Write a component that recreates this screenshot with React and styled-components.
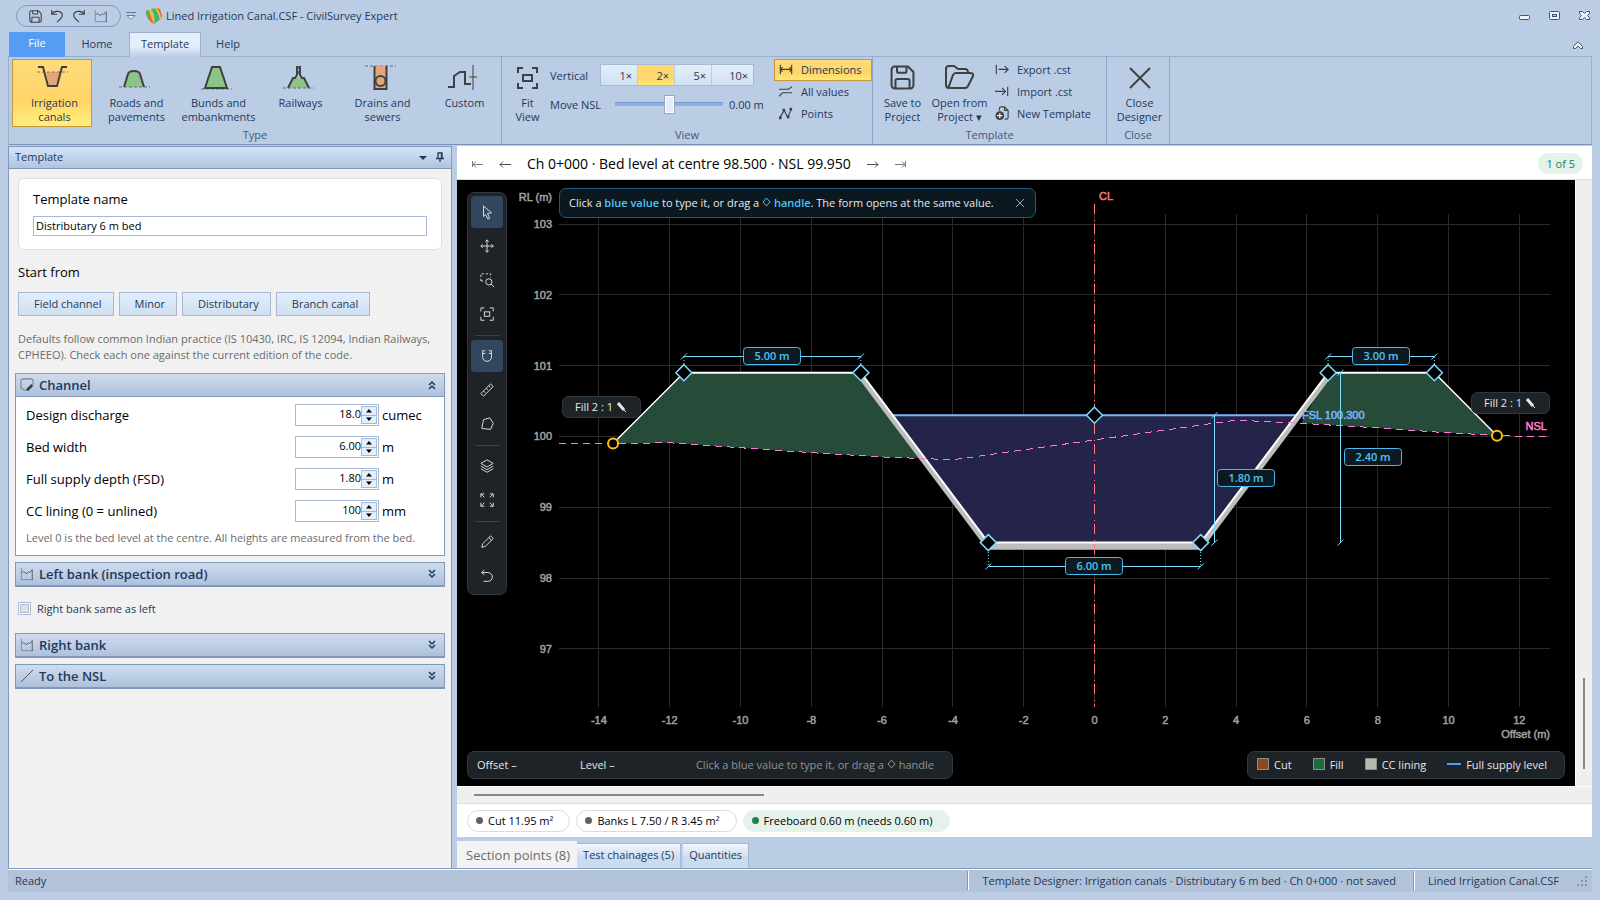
import React from 'react';
import styled, {createGlobalStyle, css} from 'styled-components';

const GlobalStyle = createGlobalStyle`
  * {
    box-sizing: border-box;
  }

  body {
    margin: 0;
    background: #bbcde5;
  }

  body, button, input {
    font-family: 'Open Sans', 'Noto Sans', sans-serif;
    font-size: 11px;
    color: #1e395b;
  }

  button {
    margin: 0;
    padding: 0;
    border: 0;
    background: none;
  }

  svg {
    display: block;
    flex: none;
  }
`;

const Window = styled.div`
  display: flex;
  flex-direction: column;
  height: 100vh;
  padding: 0 8px 8px;
  overflow: hidden;
`;

/* title bar */

const TitleBar = styled.header`
  display: flex;
  align-items: center;
  height: 32px;
  padding-left: 8px;
`;

const QuickAccess = styled.div`
  display: flex;
  align-items: center;
  gap: 8px;
  height: 22px;
  padding: 0 12px;
  border: 1px solid #7f9bbf;
  border-radius: 11px;
`;

const IconButton = styled.button`
  display: flex;
  align-items: center;
  justify-content: center;
`;

const QuickMore = styled(IconButton)`
  margin: 0 10px 0 5px;
`;

const WindowTitle = styled.h1`
  flex: 1;
  margin: 0;
  padding: 0 0 2px 4px;
  font-size: 11px;
  font-weight: 400;
`;

const WindowButtons = styled.div`
  display: flex;
  gap: 18px;
  padding-right: 1px;
`;

/* ribbon */

const TabBar = styled.nav`
  display: flex;
  height: 25px;
  margin-bottom: -1px;
  z-index: 1;
`;

const RibbonTab = styled.button`
  width: ${props => props.$width}px;
  margin-left: 1px;
  padding-bottom: 3px;

  ${props => props.$file && css`
    background: #549df3;
    color: white;
    padding-bottom: 5px;
  `}

  ${props => props.$active && css`
    border: 1px solid #9bb0cd;
    border-bottom: 0;
    background: linear-gradient(#e4effc 55%, #bbcde5);
  `}
`;

const CollapseRibbon = styled(IconButton)`
  margin: 0 9px 0 auto;
`;

const Ribbon = styled.div`
  display: flex;
  height: 89px;
  border: 1px solid #9bb0cd;
  border-bottom-color: #7a93b8;
`;

const Group = styled.section`
  display: flex;
  flex-direction: column;
  width: ${props => props.$width}px;
  border-right: 1px solid #8fa6c7;
`;

const GroupBody = styled.div`
  display: flex;
  flex: 1;
  gap: ${props => props.$gap || 0}px;
  padding: 2px 0 0 3px;
`;

const GroupTitle = styled.div`
  height: 17px;
  line-height: 16px;
  text-align: center;
  color: #41597d;
`;

const BigButton = styled.button`
  display: flex;
  flex: none;
  flex-direction: column;
  align-items: center;
  gap: 6px;
  width: ${props => props.$width || 80}px;
  height: 68px;
  padding: 5px 0 0;
  border: 1px solid transparent;
  line-height: 14px;
  white-space: pre-line;

  ${props => props.$active && css`
    border-color: #c8973a;
    background: linear-gradient(#fedb7b, #ffd567 60%, #fff07c);
  `}
`;

const TypeLabel = styled.span`
  padding-left: 5px;
`;

const ViewRows = styled.div`
  display: grid;
  grid-template-columns: 60px auto;
  grid-template-rows: 32px 26px;
  align-items: center;
  width: 224px;
`;

const Segments = styled.div`
  display: flex;
  width: 154px;
  height: 22px;
  margin-left: -10px;
  border: 1px solid #a7b9d6;
  background: linear-gradient(#e3eefa, #d0e0f0);
`;

const Segment = styled.button`
  flex: ${props => (props.$wide ? 43 : 37)} 0 0;
  padding-right: 5px;
  text-align: right;
  border-right: 1px solid #bccbe0;
  background: ${props => (props.$active ? 'linear-gradient(#ffd76e 70%, #ffe777)' : 'none')};

  &:last-child {
    border-right: 0;
  }
`;

const SliderRow = styled.div`
  display: flex;
  align-items: center;
  gap: 6px;
  margin-left: 5px;
`;

const Slider = styled.input.attrs({type: 'range'})`
  appearance: none;
  width: 108px;
  height: 20px;
  margin: 0;
  background: none;

  &::-webkit-slider-runnable-track {
    height: 4px;
    background: #8bb0e8;
    border-top: 1px solid #7896c6;
  }

  &::-webkit-slider-thumb {
    appearance: none;
    width: 11px;
    height: 19px;
    margin-top: -8px;
    border: 1px solid #98a9c4;
    background: #e4edf8;
    box-shadow: inset 0 0 0 1px white;
  }
`;

const SmallButtons = styled.div`
  display: flex;
  flex-direction: column;
`;

const SmallButton = styled.button`
  display: flex;
  align-items: center;
  gap: 8px;
  width: ${props => props.$width}px;
  height: 22px;
  padding: 0 0 2px 4px;
  border: 1px solid transparent;

  ${props => props.$active && css`
    border-color: #c8973a;
    background: linear-gradient(#ffdc7c, #ffd565 60%, #ffe777);
  `}
`;

/* left panel */

const Workspace = styled.main`
  display: flex;
  flex: 1;
  min-height: 0;
  gap: 5px;
  padding-top: 1px;
`;

const Panel = styled.aside`
  display: flex;
  flex-direction: column;
  width: 444px;
  border: 1px solid #8299bd;
  border-bottom: 0;
  background: #f1f1f1;
`;

const PanelHeader = styled.div`
  display: flex;
  align-items: center;
  gap: 8px;
  height: 22px;
  padding: 0 6px 2px;
  border-bottom: 1px solid #8299bd;
  background: linear-gradient(#d3e4f8, #afc4de);
`;

const PanelTitle = styled.h2`
  flex: 1;
  margin: 0;
  font-size: 11px;
  font-weight: 400;
`;

const PanelBody = styled.div`
  display: flex;
  flex-direction: column;
  padding: 9px 6px 0;
`;

const NameCard = styled.div`
  display: flex;
  flex-direction: column;
  gap: 7px;
  height: 72px;
  margin: 0 3px;
  padding: 10px 14px 0;
  border: 1px solid #e0e0e0;
  border-radius: 6px;
  background: white;
`;

const FieldLabel = styled.label`
  font-size: 13px;
  line-height: 20px;
  color: #000;
`;

const TextBox = styled.input.attrs({type: 'text'})`
  width: 100%;
  height: 20px;
  padding: 0 2px 1px;
  border: 1px solid #a9b8d6;
  background: white;
  color: #000;
`;

const StartLabel = styled.div`
  margin: 12px 3px 0;
  font-size: 13px;
  line-height: 20px;
  color: #000;
`;

const Presets = styled.div`
  display: flex;
  gap: 5px;
  margin: 10px 3px 0;
`;

const Preset = styled.button`
  height: 24px;
  padding: 0 11px 1px 15px;
  border: 1px solid #a9b8d6;
  background: linear-gradient(#e1edfb, #d0e0f0);
`;

const Note = styled.p`
  margin: ${props => props.$margin || '0'};
  line-height: 16px;
  color: #6b6b6b;
`;

const Accordion = styled.section`
  margin-top: ${props => props.$top}px;
  border: 1px solid #8299bd;
  border-bottom-width: ${props => (props.$open ? 1 : 2)}px;
  background: white;
`;

const AccordionHeader = styled.button`
  display: flex;
  align-items: center;
  gap: 5px;
  width: 100%;
  height: 22px;
  padding: 0 7px 0 4px;
  background: linear-gradient(#cfdcee, #adc1dc);
  font-size: 13px;
  font-weight: 600;
  text-align: left;

  svg:last-child {
    margin-left: auto;
  }
`;

const AccordionBody = styled.div`
  padding: 2px 10px 9px;
  border-top: 1px solid #8299bd;
`;

const Field = styled.div`
  display: grid;
  grid-template-columns: 1fr 84px 52px;
  column-gap: 3px;
  align-items: center;
  height: 32px;
  font-size: 13px;
  color: #000;
`;

const Spin = styled.div`
  display: flex;
  align-items: center;
  height: 22px;
  padding-right: 1px;
  border: 1px solid #a9b8d6;
  background: white;
`;

const SpinInput = styled.input.attrs({type: 'text'})`
  flex: 1;
  min-width: 0;
  height: 18px;
  padding: 0 0 3px;
  border: 0;
  background: none;
  text-align: right;
  color: #000;
`;

const SpinButtons = styled.div`
  display: grid;
  width: 16px;
  height: 18px;
  border: 1px solid #a9b8d6;
  background: #e3eefb;

  button + button {
    border-top: 1px solid #a9b8d6;
  }
`;

const CheckRow = styled.label`
  display: flex;
  align-items: center;
  gap: 6px;
  height: 46px;
  margin: 0 3px;
  padding-bottom: 3px;
`;

const CheckBox = styled.input.attrs({type: 'checkbox'})`
  appearance: none;
  width: 13px;
  height: 13px;
  margin: 0;
  border: 1px solid #a9bbdb;
  background: #dfe1e5;
  box-shadow: inset 0 0 0 1px white, inset 0 0 0 2px #b9bdc4;
`;

/* drawing area */

const Designer = styled.section`
  display: flex;
  flex: 1;
  min-width: 0;
  flex-direction: column;
`;

const StationBar = styled.div`
  display: flex;
  align-items: center;
  gap: 16px;
  height: 34px;
  padding: 2px 9px 0 14px;
  border-bottom: 1px solid #dcdcdc;
  background: white;
`;

const StationTitle = styled.div`
  font-size: 14px;
  line-height: 18px;
  color: #000;
`;

const Badge = styled.span`
  margin-left: auto;
  padding: 0 8px;
  border-radius: 11px;
  background: #e3f2ea;
  color: #1f7d57;
  line-height: 21px;
`;

const ScrollRow = styled.div`
  display: grid;
  flex: 1;
  min-height: 0;
  grid-template-columns: 1fr 17px;
  grid-template-rows: 1fr 18px;
  background: #efefef;
`;

const Canvas = styled.div`
  position: relative;
  overflow: hidden;
  background: #000;
`;

const Drawing = styled.svg`
  width: 100%;
  height: 100%;
`;

const VerticalScroll = styled.div`
  display: flex;
  flex-direction: column;
  justify-content: flex-end;
  align-items: center;
  padding-bottom: 17px;
  border-left: 1px solid white;
`;

const HorizontalScroll = styled.div`
  grid-column: 1 / 3;
  padding: 7px 0 0 17px;
  border-top: 1px solid white;
  border-bottom: 1px solid #dcdcdc;
`;

const Thumb = styled.div`
  width: ${props => (props.$vertical ? '2px' : '290px')};
  height: ${props => (props.$vertical ? '91px' : '2px')};
  background: #868686;
`;

const Floating = styled.div`
  position: absolute;
  display: flex;
  align-items: center;
  border: 1px solid #30383f;
  border-radius: 7px;
  background: #1e2327;
  color: #e4e8ea;
`;

const ToolPalette = styled(Floating)`
  top: 12px;
  left: 10px;
  flex-direction: column;
  gap: 2px;
  width: 40px;
  padding: 3px 3px 2px;
`;

const Tool = styled.button`
  display: flex;
  align-items: center;
  justify-content: center;
  width: 32px;
  height: 32px;
  border-radius: 4px;
  background: ${props => (props.$active ? '#33485f' : 'none')};
  color: #d8dcdf;
`;

const ToolDivider = styled.div`
  width: 25px;
  height: 1px;
  margin: 3px 0 2px;
  background: #3a4249;
`;

const Hint = styled(Floating)`
  top: 8px;
  left: 102px;
  gap: 21px;
  height: 30px;
  padding: 0 10px 1px 9px;
  border-color: #1f5a80;
  background: #0b1820;

  b {
    font-weight: 600;
    color: #4fc3f7;
  }
`;

const Readout = styled(Floating)`
  left: 10px;
  bottom: 7px;
  width: 486px;
  height: 28px;
  padding: 0 18px 2px 9px;
`;

const ReadoutValue = styled.span`
  width: 103px;
`;

const ReadoutTip = styled.span`
  margin-left: auto;
  color: #8a949b;
`;

const Legend = styled(Floating)`
  right: 10px;
  bottom: 7px;
  gap: 21px;
  height: 28px;
  padding: 0 17px 2px 9px;
`;

const LegendItem = styled.span`
  display: flex;
  align-items: center;
  gap: 5px;
`;

const Swatch = styled.i`
  width: ${props => (props.$line ? 14 : 12)}px;
  height: ${props => (props.$line ? 2 : 12)}px;
  border: ${props => (props.$line ? 0 : 1)}px solid #8b8f8c;
  background: ${props => props.$color};
`;

const ChipBar = styled.div`
  display: flex;
  align-items: center;
  gap: 6px;
  height: 33px;
  padding-left: 10px;
  background: white;
`;

const Chip = styled.span`
  display: flex;
  align-items: center;
  gap: 5px;
  height: 22px;
  padding: 0 16px 0 8px;
  border: 1px solid ${props => (props.$ok ? '#e3f2ea' : '#dcdcdc')};
  border-radius: 11px;
  background: ${props => (props.$ok ? '#e3f2ea' : 'white')};
  color: #000;

  &::before {
    content: '';
    width: 7px;
    height: 7px;
    border-radius: 50%;
    background: ${props => (props.$ok ? '#1f7d57' : '#616161')};
  }
`;

const SheetTabs = styled.div`
  display: flex;
  align-items: flex-end;
  height: 31px;
`;

const SheetTab = styled.button`
  height: ${props => (props.$active ? 27 : 25)}px;
  padding: ${props => (props.$active ? '0 7px 0 9px' : '0 6px 3px')};
  border: 1px solid #a3b6d4;
  border-width: ${props => (props.$active ? '0' : '1px 1px 0 0')};
  background: ${props => (props.$active ? '#f3f3f3' : 'linear-gradient(#f2f7fd, #cbdcee 60%)')};
  color: ${props => (props.$active ? '#6b6b6b' : '#1e395b')};
  font-size: ${props => (props.$active ? 13 : 11)}px;

  & + & + & {
    margin-left: 2px;
  }
`;

const StatusBar = styled.footer`
  display: flex;
  align-items: center;
  height: 24px;
  padding: 0 4px 0 7px;
  border-top: 1px solid #7f99bd;
  background: #b1c2d9;
  box-shadow: inset 0 1px 0 white;
`;

const StatusItem = styled.span`
  display: flex;
  align-items: center;
  height: 19px;
  padding: 0 17px 0 14px;
  border-left: 1px solid #8a94a3;
  box-shadow: inset 1px 0 0 white;
`;

const StatusReady = styled.span`
  flex: 1;
`;

/* icons */

const Icon = ({size = 14, box = 16, color = '#404040', width = 1.3, children, ...rest}) => (
  <svg width={size} height={size} viewBox={`0 0 ${box} ${box}`} fill="none" stroke={color}
    strokeWidth={width} aria-hidden="true" {...rest}>
    {children}
  </svg>
);

const SaveIcon = props => (
  <Icon {...props}>
    <path d="M3 1h8.5L15 4.500V13a2 2 0 0 1-2 2H3a2 2 0 0 1-2-2V3a2 2 0 0 1 2-2z"/>
    <path d="M4.500 1v3a1 1 0 0 0 1 1h4a1 1 0 0 0 1-1V1M3.500 15v-5a1 1 0 0 1 1-1h7a1 1 0 0 1 1 1v5"/>
  </Icon>
);

const ProfileIcon = props => (
  <Icon width={1.1} {...props}>
    <path d="M1.500 1v13.500H15" stroke="#858b95"/>
    <path d="M2 6.500l2-1.500 3 2.500 3-2 1 1 3-3.500v12" stroke="#5a5f68"/>
  </Icon>
);

const Chevrons = ({up}) => (
  <Icon size={10} box={10} color="#1e395b" width={1.5} transform={up ? 'rotate(180)' : undefined}>
    <path d="M2 1l3 3 3-3M2 5l3 3 3-3"/>
  </Icon>
);

const typeArt = {
  canal: (
    <>
      <path d="M9 7h14l-4 14h-7z" fill="#e3a67c" stroke="none"/>
      <path d="M0 7h31" stroke="#8a7a55" strokeDasharray="3 2"/>
      <path d="M1 2h5l5 19h9l5-19h5" strokeWidth="2"/>
    </>
  ),
  road: (
    <>
      <path d="M5 22L9 9q6-7 12 0l4 13z" fill="#8cc487" stroke="none"/>
      <path d="M5 22L9 9q1-3 6-3t6 3l4 13" strokeWidth="2"/>
      <path d="M0 22h31" stroke="#606a75" strokeDasharray="3 2"/>
    </>
  ),
  bund: (
    <>
      <path d="M0 24h31" stroke="#606a75" strokeDasharray="3 2"/>
      <path d="M4 23L11 2h8l7 21z" fill="#8cc487" strokeWidth="2"/>
    </>
  ),
  rail: (
    <>
      <path d="M5 23l5-10h11l5 10z" fill="#8cc487" stroke="none"/>
      <path d="M5 23l5-10h2l2-3V1M17 1v9l2 3h2l5 10" strokeWidth="2"/>
      <path d="M0 23h31M15.500 1v8" stroke="#606a75" strokeDasharray="3 2"/>
    </>
  ),
  drain: (
    <>
      <path d="M0 1h31" stroke="#606a75" strokeDasharray="3 2"/>
      <path d="M9 1h13v23H9z" fill="#e3a67c" stroke="none"/>
      <path d="M9.500 1v23h12V1" strokeWidth="2"/>
      <circle cx="15.500" cy="16" r="5" strokeWidth="2"/>
    </>
  ),
  custom: (
    <>
      <path d="M1 22h6V11l6-4h5v12h6" strokeWidth="2"/>
      <path d="M26 0v25M22 12h8"/>
    </>
  ),
};

const TypeIcon = ({name}) => (
  <svg width="31" height="25" viewBox="0 0 31 25" fill="none" stroke="#404040" aria-hidden="true">
    {typeArt[name]}
  </svg>
);

const toolArt = {
  select: <path d="M4 1l9 8-4.500.5L11 15l-2 1-2.500-5L4 13z"/>,
  pan: <path d="M8 1v14M1 8h14M6 3l2-2 2 2M6 13l2 2 2-2M3 6L1 8l2 2M13 6l2 2-2 2"/>,
  zoom: (
    <>
      <path d="M1 9V1h11v4M1 9h4" strokeDasharray="2.500 2"/>
      <circle cx="10" cy="10" r="3.500"/>
      <path d="M12.500 12.500L16 16"/>
    </>
  ),
  fit: (
    <>
      <path d="M1 5V1h4M11 1h4v4M15 11v4h-4M5 15H1v-4"/>
      <rect x="5" y="5.500" width="6" height="5"/>
    </>
  ),
  snap: <path d="M3 2v7a5 5 0 0 0 10 0V2M3 2h3M10 2h3M3 5h3M10 5h3"/>,
  measure: <path d="M1 12L12 1l3 3L4 15zM4 9l2 2M7 6l2 2M10 3l2 2"/>,
  polygon: <path d="M4 3l7-2 4 6-3 7-10-1z"/>,
  layers: <path d="M8 1l7 4-7 4-7-4zM1 8l7 4 7-4M1 11l7 4 7-4"/>,
  expand: <path d="M1 5V1h4M11 1h4v4M15 11v4h-4M5 15H1v-4M1 1l4 4M15 1l-4 4M15 15l-4-4M1 15l4-4"/>,
  pencil: <path d="M2 14l1-4 9-9 3 3-9 9zM10 3l3 3"/>,
  undo: <path d="M5 1L2 4l3 3M2 4h7a5 5 0 0 1 0 10H4"/>,
};

const tools = ['select', 'pan', 'zoom', 'fit', null, 'snap', 'measure', 'polygon', null, 'layers', 'expand', null, 'pencil', 'undo'];

const types = [
  {name: 'canal', label: 'Irrigation\ncanals'},
  {name: 'road', label: 'Roads and\npavements'},
  {name: 'bund', label: 'Bunds and\nembankments'},
  {name: 'rail', label: 'Railways'},
  {name: 'drain', label: 'Drains and\nsewers'},
  {name: 'custom', label: 'Custom'},
];

const fields = [
  {id: 'discharge', label: 'Design discharge', value: '18.0', unit: 'cumec'},
  {id: 'bed', label: 'Bed width', value: '6.00', unit: 'm'},
  {id: 'fsd', label: 'Full supply depth (FSD)', value: '1.80', unit: 'm'},
  {id: 'lining', label: 'CC lining (0 = unlined)', value: '100', unit: 'mm'},
];

/* cross section, offsets and levels in metres, vertical scale doubled */

const X = offset => 637.5 + 35.4 * offset;
const Y = level => 44 + 70.8 * (103 - level);
const points = list => list.map(([o, l]) => `${X(o)},${Y(l)}`).join(' ');

const offsets = [-14, -12, -10, -8, -6, -4, -2, 0, 2, 4, 6, 8, 10, 12];
const levels = [103, 102, 101, 100, 99, 98, 97];

const surface = [[-13.6, 99.9], [-11.6, 100.9], [-6.6, 100.9], [-3, 98.5], [3, 98.5], [6.6, 100.9], [9.6, 100.9], [11.37, 100.01]];
const lining = [[-6.6, 100.9], [-3, 98.5], [3, 98.5], [6.6, 100.9], [6.78, 100.9], [3.03, 98.4], [-3.03, 98.4], [-6.78, 100.9]];
const ground = [[-15.12, 99.9], [-13.6, 99.9], [-12, 99.91], [-10, 99.84], [-8, 99.77], [-6, 99.71], [-4, 99.67], [0, 99.95], [4, 100.23], [6, 100.18], [8, 100.12], [10, 100.05], [12, 100], [12.87, 100]];
const leftFill = [[-13.6, 99.9], [-11.6, 100.9], [-6.6, 100.9], [-4.95, 99.69], [-6, 99.71], [-8, 99.77], [-10, 99.84], [-12, 99.91]];
const rightFill = [[5.85, 100.19], [6.6, 100.9], [9.6, 100.9], [11.37, 100.01], [10, 100.05], [8, 100.12]];
const handles = [[-11.6, 100.9], [-6.6, 100.9], [-3, 98.5], [0, 100.3], [3, 98.5], [6.6, 100.9], [9.6, 100.9]];

const AxisText = styled.text`
  font: 11px 'Liberation Sans', sans-serif;
  fill: ${props => props.$color || '#a0a0a0'};
  stroke: ${props => props.$color || '#a0a0a0'};
  stroke-width: 0.5;
`;

const DimText = styled.text`
  font: 600 11px 'Open Sans', sans-serif;
  fill: #4fc3f7;
  text-anchor: middle;
`;

const Dimension = ({x1, y1, x2, y2, lx, ly, label}) => (
  <g>
    <path d={`M${x1} ${y1}L${x2} ${y2}M${x1 - 3} ${y1 + 3}l6-6M${x2 - 3} ${y2 + 3}l6-6`} stroke="#7bdcff"/>
    <rect x={lx - 28.5} y={ly - 8.5} width="57" height="17" rx="3" fill="#0e1a22" stroke="#4cb8f0"/>
    <DimText x={lx} y={ly + 4}>{label}</DimText>
  </g>
);

const SlopeTag = ({x, y}) => (
  <g>
    <rect x={x + 0.5} y={y + 0.5} width="78" height="21" rx="6" fill="#1e2327" stroke="#30383f"/>
    <text x={x + 13} y={y + 15} fontSize="11" fill="#e4e8ea">Fill 2 : 1</text>
    <path d={`M${x + 56} ${y + 7}l6 7`} stroke="#e4e8ea" strokeWidth="3"/>
    <path d={`M${x + 62} ${y + 14}l2 2`} stroke="#e4e8ea"/>
  </g>
);

const CrossSection = () => (
  <Drawing viewBox="0 0 1118 606" role="img" aria-label="Canal cross section">
    <g stroke="#2b2b2b" shapeRendering="crispEdges">
      {offsets.map(o => <line key={o} x1={X(o)} x2={X(o)} y1="34" y2="527"/>)}
      {levels.map(l => <line key={l} x1="102" x2="1093" y1={Y(l)} y2={Y(l)}/>)}
    </g>
    <AxisText x="95" y="21" textAnchor="end">RL (m)</AxisText>
    {levels.map(l => <AxisText key={l} x="95" y={Y(l) + 4} textAnchor="end">{l}</AxisText>)}
    {offsets.map(o => <AxisText key={o} x={X(o)} y="544" textAnchor="middle">{o}</AxisText>)}
    <AxisText x="1093" y="558" textAnchor="end">Offset (m)</AxisText>

    <polygon points={points([[-5.7, 100.3], [-3, 98.5], [3, 98.5], [5.7, 100.3]])} fill="#24244a"/>
    <polygon points={points(leftFill)} fill="#264b38"/>
    <polygon points={points(rightFill)} fill="#264b38"/>
    <polygon points={points(lining)} fill="#bdbdbd"/>
    <line x1={X(-5.7)} x2={X(5.7)} y1={Y(100.3)} y2={Y(100.3)} stroke="#7ab6ff" strokeWidth="2"/>
    <polyline points={points(surface.slice(0, 2))} fill="none" stroke="#fff" strokeWidth="1.500"/>
    <polyline points={points(surface.slice(1, 7))} fill="none" stroke="#fff" strokeWidth="2"/>
    <polyline points={points(surface.slice(6))} fill="none" stroke="#fff" strokeWidth="1.500"/>
    <polyline points={points(ground)} fill="none" stroke="#ff7bdc" strokeDasharray="7 5" shapeRendering="crispEdges"/>
    <line x1={X(0)} x2={X(0)} y1="24" y2="527" stroke="#ff7b7b" strokeDasharray="10 6 1 3"/>
    <AxisText x="642" y="20" $color="#ff7b7b">CL</AxisText>
    <AxisText x="845" y="239" $color="#7ab6ff">FSL 100.300</AxisText>
    <AxisText x="1090" y="250" textAnchor="end" $color="#ff7bdc">NSL</AxisText>

    <SlopeTag x={105} y={216}/>
    <SlopeTag x={1014} y={212}/>

    <g stroke="#7bdcff" strokeDasharray="1 2">
      <path d={`M${X(-11.6)} 177V200M${X(-6.6)} 177V200M${X(6.6)} 177V200M${X(9.6)} 177V200`}/>
      <path d={`M${X(-3)} 363V386M${X(3)} 363V386`}/>
    </g>
    <g fill="#000" stroke="#7bdcff" strokeWidth="1.500">
      {handles.map(([o, l]) => (
        <path key={o} d={`M${X(o)} ${Y(l) - 8}l8 8-8 8-8-8z`}/>
      ))}
    </g>
    <Dimension x1={X(-11.6)} y1={176.5} x2={X(-6.6)} y2={176.5} lx={315} ly={176} label="5.00 m"/>
    <Dimension x1={X(6.6)} y1={176.5} x2={X(9.6)} y2={176.5} lx={924} ly={176} label="3.00 m"/>
    <Dimension x1={X(-3)} y1={386.5} x2={X(3)} y2={386.5} lx={637} ly={386} label="6.00 m"/>
    <Dimension x1={757.5} y1={Y(100.3)} x2={757.5} y2={Y(98.5)} lx={789} ly={298} label="1.80 m"/>
    <Dimension x1={883.5} y1={Y(100.9)} x2={883.5} y2={Y(98.5)} lx={916} ly={277} label="2.40 m"/>
    <g fill="#000" stroke="#ffc107" strokeWidth="2">
      <circle cx={X(-13.6)} cy={Y(99.9)} r="5"/>
      <circle cx={X(11.37)} cy={Y(100.01)} r="5"/>
    </g>
  </Drawing>
);

const DiamondGlyph = styled.svg`
  display: inline-block;
`;

const Diamond = ({color = 'currentColor'}) => (
  <DiamondGlyph width="9" height="10" viewBox="0 0 9 10" fill="none" stroke={color} aria-hidden="true">
    <path d="M4.500 1L8 5 4.500 9 1 5z"/>
  </DiamondGlyph>
);

const Section = ({title, icon, top, open, children}) => (
  <Accordion $top={top} $open={open}>
    <AccordionHeader aria-expanded={!!open}>
      {icon}
      {title}
      <Chevrons up={open}/>
    </AccordionHeader>
    {open ? <AccordionBody>{children}</AccordionBody> : null}
  </Accordion>
);

const TitleArea = () => (
  <TitleBar>
    <QuickAccess>
      <IconButton aria-label="Save"><SaveIcon size={13}/></IconButton>
      <IconButton aria-label="Undo">
        <Icon><path d="M2 1v5h6M2 6c3-5 12-4 12 1 0 3-3 5-6 8"/></Icon>
      </IconButton>
      <IconButton aria-label="Redo">
        <Icon><path d="M14 1v5H8M14 6C11 1 2 2 2 7c0 3 3 5 6 8"/></Icon>
      </IconButton>
      <IconButton aria-label="Section"><ProfileIcon/></IconButton>
    </QuickAccess>
    <QuickMore aria-label="Customize toolbar">
      <Icon size={10} box={10} color="#5f7da6" width={1}>
        <path d="M0 1.500h10M1 4.500h8L5 8.500z" fill="#e6eef9"/>
      </Icon>
    </QuickMore>
    <svg width="16" height="16" viewBox="0 0 16 16" aria-hidden="true">
      <path d="M0 3l4-1 5 14q-3 0-5-3Q0 9 0 3z" fill="#e5663c"/>
      <path d="M0 3l3-1 2 5-3 3Q0 7 0 3z" fill="#52b26b"/>
      <path d="M3 2l4-1 4 12-3 3Q5 10 3 2z" fill="#efc140"/>
      <path d="M5 1l6-1 5 10-8 6Q10 8 5 1z" fill="#3fb573"/>
      <path d="M9 0h4l3 9-2 3Q13 6 9 0z" fill="#f0c63e"/>
      <path d="M11 0l3 1 2 7-1 2Q14 4 11 0z" fill="#e5663c"/>
    </svg>
    <WindowTitle>Lined Irrigation Canal.CSF - CivilSurvey Expert</WindowTitle>
    <WindowButtons>
      <IconButton aria-label="Minimize">
        <Icon size={12} box={12} color="#47536b" width={1}><rect x=".5" y="5.500" width="10" height="4" rx="1" fill="#eef3fa"/></Icon>
      </IconButton>
      <IconButton aria-label="Maximize">
        <Icon size={12} box={12} color="#47536b" width={1}>
          <rect x=".5" y="1.500" width="10" height="8" rx="1" fill="#eef3fa"/>
          <rect x="3.500" y="4.500" width="4" height="2" fill="#bbcde5"/>
        </Icon>
      </IconButton>
      <IconButton aria-label="Close">
        <Icon size={12} box={12} color="#47536b" width={1}>
          <path d="M.5 1.500h3l2 2 2-2h3v2l-2 2 2 2v2h-3l-2-2-2 2h-3v-2l2-2-2-2z" fill="#eef3fa"/>
        </Icon>
      </IconButton>
    </WindowButtons>
  </TitleBar>
);

const RibbonArea = () => (
  <>
    <TabBar>
      <RibbonTab $width={56} $file>File</RibbonTab>
      <RibbonTab $width={62}>Home</RibbonTab>
      <RibbonTab $width={72} $active>Template</RibbonTab>
      <RibbonTab $width={52}>Help</RibbonTab>
      <CollapseRibbon aria-label="Collapse ribbon">
        <Icon size={10} box={10} color="#47536b" width={1}>
          <path d="M.5 6.500l4-4.500h1l4 4.500v2h-2L5 6 2.500 8.500h-2z" fill="#eef3fa"/>
        </Icon>
      </CollapseRibbon>
    </TabBar>
    <Ribbon>
      <Group $width={493}>
        <GroupBody $gap={2}>
          {types.map((type, i) => (
            <BigButton key={type.name} $active={i === 0}>
              <TypeIcon name={type.name}/>
              <TypeLabel>{type.label}</TypeLabel>
            </BigButton>
          ))}
        </GroupBody>
        <GroupTitle>Type</GroupTitle>
      </Group>
      <Group $width={371}>
        <GroupBody>
          <BigButton $width={45}>
            <svg width="23" height="25" viewBox="0 0 23 25" fill="none" stroke="#404040" strokeWidth="2" aria-hidden="true">
              <path d="M2 8V3h5M16 3h5v5M21 18v5h-5M7 23H2v-5"/>
              <rect x="7" y="10" width="9" height="6"/>
            </svg>
            {'Fit\nView'}
          </BigButton>
          <ViewRows>
            <span>Vertical</span>
            <Segments>
              <Segment>1×</Segment>
              <Segment $active>2×</Segment>
              <Segment>5×</Segment>
              <Segment $wide>10×</Segment>
            </Segments>
            <label htmlFor="move-nsl">Move NSL</label>
            <SliderRow>
              <Slider id="move-nsl" min="-5" max="5" defaultValue="0"/>
              <span>0.00 m</span>
            </SliderRow>
          </ViewRows>
          <SmallButtons>
            <SmallButton $width={98} $active>
              <Icon><path d="M1.500 3v11M14.500 3v11M1 8.500h14M4 6L1.500 8.500 4 11M12 6l2.500 2.500L12 11"/></Icon>
              Dimensions
            </SmallButton>
            <SmallButton $width={98}>
              <Icon><path d="M0 6h11l4-3M15 10H4l-4 4"/></Icon>
              All values
            </SmallButton>
            <SmallButton $width={98}>
              <Icon>
                <path d="M1 13l5-8 4 8 4-9"/>
                <path d="M0 12h3v3H0zM4 3h3v3H4zM9 11h3v3H9zM12 2h3v3h-3z" fill="#404040" stroke="none"/>
              </Icon>
              Points
            </SmallButton>
          </SmallButtons>
        </GroupBody>
        <GroupTitle>View</GroupTitle>
      </Group>
      <Group $width={234}>
        <GroupBody>
          <BigButton $width={53}>
            <SaveIcon size={25}/>
            {'Save to\nProject'}
          </BigButton>
          <BigButton $width={61}>
            <svg width="29" height="25" viewBox="0 0 29 25" fill="none" stroke="#404040" strokeWidth="2" aria-hidden="true">
              <path d="M4 23Q1 23 1 20V4q0-3 3-3h5l4 3h7q3 0 3 4H11q-2 0-3 2L4 21q-1 2 2 2h14q2 0 3-2l5-10q1-3-3-3h-2"/>
            </svg>
            {'Open from\nProject  ▾'}
          </BigButton>
          <SmallButtons>
            <SmallButton $width={110}>
              <Icon><path d="M1.500 3v11M4 8.500h11M11 4.500l4 4-4 4"/></Icon>
              Export .cst
            </SmallButton>
            <SmallButton $width={110}>
              <Icon><path d="M14.500 3v11M0 8.500h12M8 4.500l4 4-4 4"/></Icon>
              Import .cst
            </SmallButton>
            <SmallButton $width={110}>
              <Icon>
                <path d="M5 5V3q0-2 2-2h4l4 4v8q0 2-2 2h-2M11 1v4h4"/>
                <circle cx="5.500" cy="11" r="5" fill="#404040" stroke="none"/>
                <path d="M5.500 8v6M2.500 11h6" stroke="#fff"/>
              </Icon>
              New Template
            </SmallButton>
          </SmallButtons>
        </GroupBody>
        <GroupTitle>Template</GroupTitle>
      </Group>
      <Group $width={63}>
        <GroupBody>
          <BigButton $width={59}>
            <svg width="23" height="25" viewBox="0 0 23 25" fill="none" stroke="#404040" strokeWidth="2" aria-hidden="true">
              <path d="M2 3l20 20M22 3L2 23"/>
            </svg>
            {'Close\nDesigner'}
          </BigButton>
        </GroupBody>
        <GroupTitle>Close</GroupTitle>
      </Group>
    </Ribbon>
  </>
);

const TemplatePanel = () => (
  <Panel>
    <PanelHeader>
      <PanelTitle>Template</PanelTitle>
      <IconButton aria-label="Panel menu">
        <Icon size={8} box={8}><path d="M0 3h8L4 7z" fill="#1e395b" stroke="none"/></Icon>
      </IconButton>
      <IconButton aria-label="Pin">
        <Icon size={10} box={10} color="#1e395b"><path d="M3 6V1h4v5M1 6.500h8M5 6v4M6.500 1v5"/></Icon>
      </IconButton>
    </PanelHeader>
    <PanelBody>
      <NameCard>
        <FieldLabel htmlFor="template-name">Template name</FieldLabel>
        <TextBox id="template-name" defaultValue="Distributary 6 m bed"/>
      </NameCard>
      <StartLabel>Start from</StartLabel>
      <Presets>
        <Preset>Field channel</Preset>
        <Preset>Minor</Preset>
        <Preset>Distributary</Preset>
        <Preset>Branch canal</Preset>
      </Presets>
      <Note $margin="15px 3px 0">
        Defaults follow common Indian practice (IS 10430, IRC, IS 12094, Indian Railways,
        CPHEEO). Check each one against the current edition of the code.
      </Note>
      <Section
        title="Channel"
        top={10}
        open
        icon={
          <Icon>
            <path d="M8 14H5l-4-3V4q0-3 3-3h8q3 0 3 3v4" stroke="#7a8494"/>
            <path d="M8 14l6-6" strokeWidth="3"/>
          </Icon>
        }
      >
        {fields.map(field => (
          <Field key={field.id}>
            <label htmlFor={field.id}>{field.label}</label>
            <Spin>
              <SpinInput id={field.id} defaultValue={field.value}/>
              <SpinButtons>
                <IconButton aria-label="Increase">
                  <Icon size={6} box={6}><path d="M0 4.500h6L3 1z" fill="#000" stroke="none"/></Icon>
                </IconButton>
                <IconButton aria-label="Decrease">
                  <Icon size={6} box={6}><path d="M0 1.500h6L3 5z" fill="#000" stroke="none"/></Icon>
                </IconButton>
              </SpinButtons>
            </Spin>
            <span>{field.unit}</span>
          </Field>
        ))}
        <Note $margin="3px 0 0">Level 0 is the bed level at the centre. All heights are measured from the bed.</Note>
      </Section>
      <Section title="Left bank (inspection road)" top={6} icon={<ProfileIcon/>}/>
      <CheckRow>
        <CheckBox/>
        Right bank same as left
      </CheckRow>
      <Section title="Right bank" top={0} icon={<ProfileIcon/>}/>
      <Section title="To the NSL" top={6} icon={<Icon width={1}><path d="M1 15L15 1"/></Icon>}/>
    </PanelBody>
  </Panel>
);

const DesignerArea = () => (
  <Designer>
    <StationBar>
      <IconButton aria-label="First chainage">
        <Icon size={12} box={12} color="#7a7a7a" width={1}><path d="M1.500 3v6M2 6.500h10M5 3.500l-3 3 3 3"/></Icon>
      </IconButton>
      <IconButton aria-label="Previous chainage">
        <Icon size={12} box={12} color="#505050" width={1}><path d="M1 6.500h11M4 3.500l-3 3 3 3"/></Icon>
      </IconButton>
      <StationTitle>Ch 0+000 · Bed level at centre 98.500 · NSL 99.950</StationTitle>
      <IconButton aria-label="Next chainage">
        <Icon size={12} box={12} color="#505050" width={1}><path d="M0 6.500h11M8 3.500l3 3-3 3"/></Icon>
      </IconButton>
      <IconButton aria-label="Last chainage">
        <Icon size={12} box={12} color="#7a7a7a" width={1}><path d="M10.500 3v6M0 6.500h10M7 3.500l3 3-3 3"/></Icon>
      </IconButton>
      <Badge>1 of 5</Badge>
    </StationBar>
    <ScrollRow>
      <Canvas>
        <CrossSection/>
        <ToolPalette>
          {tools.map((tool, i) => (
            tool
              ? (
                <Tool key={tool} aria-label={tool} $active={tool === 'select' || tool === 'snap'}>
                  <Icon size={15} box={17} color="currentColor" width={1.1}>{toolArt[tool]}</Icon>
                </Tool>
              )
              : <ToolDivider key={i}/>
          ))}
        </ToolPalette>
        <Hint>
          <span>
            Click a <b>blue value</b> to type it, or drag a <Diamond color="#4fc3f7"/> <b>handle</b>. The form opens at the same value.
          </span>
          <IconButton aria-label="Dismiss">
            <Icon size={10} box={10} color="#9aa5ac" width={1}><path d="M1 1l8 8M9 1L1 9"/></Icon>
          </IconButton>
        </Hint>
        <Readout>
          <ReadoutValue>Offset –</ReadoutValue>
          <ReadoutValue>Level –</ReadoutValue>
          <ReadoutTip>Click a blue value to type it, or drag a <Diamond/> handle</ReadoutTip>
        </Readout>
        <Legend>
          <LegendItem><Swatch $color="#8b4a1f"/>Cut</LegendItem>
          <LegendItem><Swatch $color="#1f6b40"/>Fill</LegendItem>
          <LegendItem><Swatch $color="#b8b8b0"/>CC lining</LegendItem>
          <LegendItem><Swatch $line $color="#4a9eff"/>Full supply level</LegendItem>
        </Legend>
      </Canvas>
      <VerticalScroll><Thumb $vertical/></VerticalScroll>
      <HorizontalScroll><Thumb/></HorizontalScroll>
    </ScrollRow>
    <ChipBar>
      <Chip>Cut 11.95 m²</Chip>
      <Chip>Banks L 7.50 / R 3.45 m²</Chip>
      <Chip $ok>Freeboard 0.60 m (needs 0.60 m)</Chip>
    </ChipBar>
    <SheetTabs>
      <SheetTab $active>Section points (8)</SheetTab>
      <SheetTab>Test chainages (5)</SheetTab>
      <SheetTab>Quantities</SheetTab>
    </SheetTabs>
  </Designer>
);

const App = () => (
  <Window>
    <GlobalStyle/>
    <TitleArea/>
    <RibbonArea/>
    <Workspace>
      <TemplatePanel/>
      <DesignerArea/>
    </Workspace>
    <StatusBar>
      <StatusReady>Ready</StatusReady>
      <StatusItem>Template Designer: Irrigation canals · Distributary 6 m bed · Ch 0+000 · not saved</StatusItem>
      <StatusItem>Lined Irrigation Canal.CSF</StatusItem>
      <Icon size={12} box={12}>
        <path d="M9 1h2v2H9zM9 5h2v2H9zM5 5h2v2H5zM9 9h2v2H9zM5 9h2v2H5zM1 9h2v2H1z" fill="#8795ab" stroke="none"/>
      </Icon>
    </StatusBar>
  </Window>
);

export default App;
